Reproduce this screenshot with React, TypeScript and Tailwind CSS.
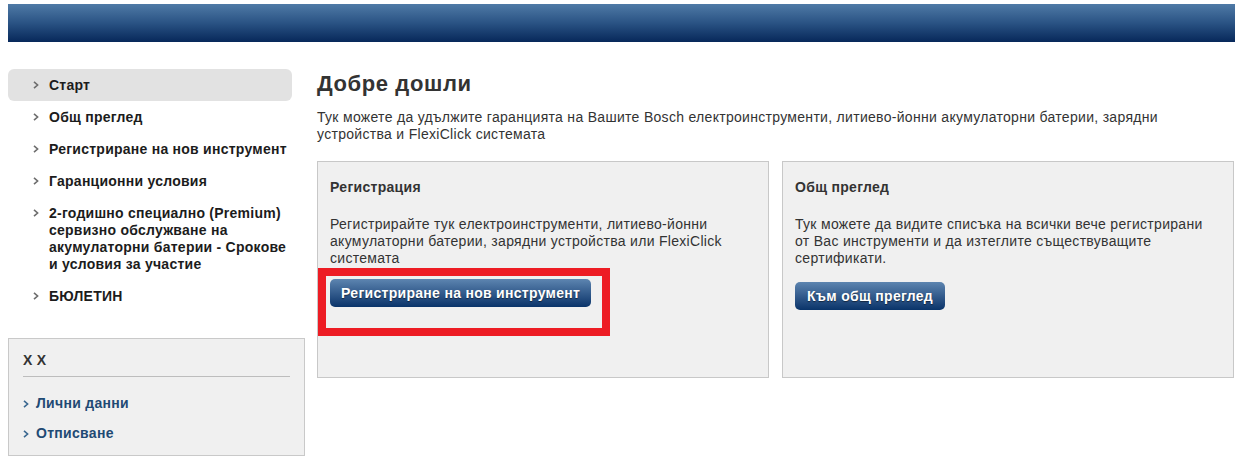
import React from "react";

const Chevron = ({ className = "" }: { className?: string }) => (
  <svg width="6" height="8" viewBox="0 0 6 8" className={className} fill="none">
    <path d="M1 0.8 L4.6 4 L1 7.2" stroke="currentColor" strokeWidth="1.6" />
  </svg>
);

const navItems: { label: React.ReactNode; active?: boolean }[] = [
  { label: "Старт", active: true },
  { label: "Общ преглед" },
  { label: "Регистриране на нов инструмент" },
  { label: "Гаранционни условия" },
  {
    label: (
      <>
        2-годишно специално (Premium) сервизно обслужване на акумулаторни батерии - Срокове и условия за участие
      </>
    ),
  },
  { label: "БЮЛЕТИН" },
];

export default function App() {
  return (
    <div
      className="min-h-[465px] bg-white text-[#333] text-[14px] tracking-[0.3px]"
      style={{ fontFamily: '"Liberation Sans", Arial, sans-serif' }}
    >
      <div className="pt-[4px] pl-[8px] pr-[4px]">
        <div className="h-[38px] bg-gradient-to-b from-[#4f7aa6] via-[#2a5384] to-[#07285a]" />
      </div>

      <div className="flex pl-[8px] pr-[5px] pt-[27px]">
        {/* Sidebar */}
        <div className="w-[297px] shrink-0">
          <ul className="w-[284px] tracking-[0.25px]">
            {navItems.map((it, i) => (
              <li
                key={i}
                className={`flex pt-[8px] pb-[7px] pl-[25px] pr-0 leading-[17px] font-bold text-[#1c1c1c] rounded-[6px] ${
                  it.active ? "bg-[#e2e2e2]" : ""
                }`}
              >
                <span className="w-[16px] shrink-0 pt-[4px] text-[#6d6d6d]">
                  <Chevron />
                </span>
                <span>{it.label}</span>
              </li>
            ))}
          </ul>

          <div className="mt-[26px] h-[118px] border border-[#c9c9c9] bg-[#f0f0f0] px-[14px] pt-[13px]">
            <div className="font-bold text-[#333] leading-[17px] uppercase">x x</div>
            <div className="mt-[7px] border-t border-[#bdbdbd]" />
            <div className="mt-[18px] flex items-center font-bold text-[#1f4a74] leading-[17px]">
              <span className="w-[13px] shrink-0 text-[#3a6790]">
                <Chevron />
              </span>
              Лични данни
            </div>
            <div className="mt-[13px] flex items-center font-bold text-[#1f4a74] leading-[17px]">
              <span className="w-[13px] shrink-0 text-[#3a6790]">
                <Chevron />
              </span>
              Отписване
            </div>
          </div>
        </div>

        {/* Main */}
        <div className="ml-[12px] flex-1">
          <h1 className="text-[22px] font-bold leading-[26px] text-[#333] mt-[2px] tracking-[0.6px]">Добре дошли</h1>
          <p className="mt-[12px] leading-[17px] text-[#333]">
            Тук можете да удължите гаранцията на Вашите Bosch електроинструменти, литиево-йонни акумулаторни батерии, зарядни
            устройства и FlexiClick системата
          </p>

          <div className="mt-[18px] flex gap-[13px]">
            <div className="relative w-[452px] h-[217px] border border-[#c8c8c8] bg-[#f0f0f0] px-[12px] pt-[17px]">
              <div className="font-bold leading-[17px] text-[#333]">Регистрация</div>
              <p className="mt-[20px] leading-[17px] text-[#333]">
                Регистрирайте тук електроинструменти, литиево-йонни акумулаторни батерии, зарядни устройства или FlexiClick
                системата
              </p>
              <button className="mt-[12px] h-[28px] rounded-[5px] bg-gradient-to-b from-[#5d85b0] to-[#09346a] px-[11px] font-bold text-white leading-[17px] tracking-[0.3px] [text-shadow:0_1px_1px_rgba(0,0,0,0.5)]">
                Регистриране на нов инструмент
              </button>
              <div className="absolute left-[0px] top-[106px] w-[292px] h-[68px] border-[8px] border-[#ed1c24]" />
            </div>

            <div className="w-[452px] h-[217px] border border-[#c8c8c8] bg-[#f0f0f0] px-[12px] pt-[17px]">
              <div className="font-bold leading-[17px] text-[#333]">Общ преглед</div>
              <p className="mt-[20px] leading-[17px] text-[#333]">
                Тук можете да видите списъка на всички вече регистрирани от Вас инструменти и да изтеглите съществуващите
                сертификати.
              </p>
              <button className="mt-[15px] h-[28px] rounded-[5px] bg-gradient-to-b from-[#5d85b0] to-[#09346a] px-[12px] font-bold text-white leading-[17px] tracking-[0.3px] [text-shadow:0_1px_1px_rgba(0,0,0,0.5)]">
                Към общ преглед
              </button>
            </div>
          </div>
        </div>
      </div>
    </div>
  );
}
